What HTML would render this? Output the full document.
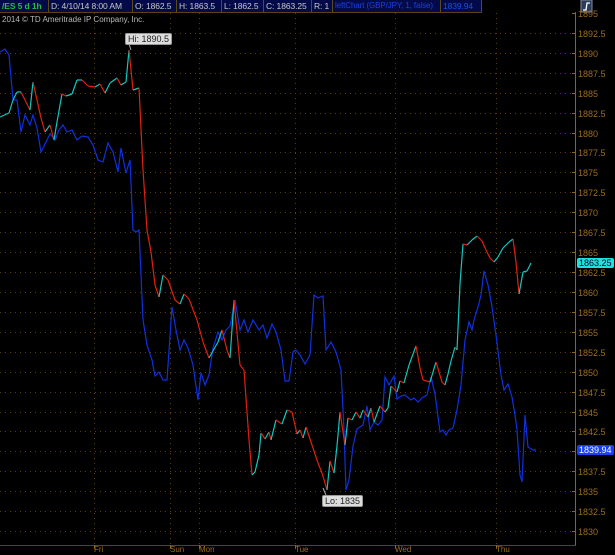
<!DOCTYPE html>
<html><head><meta charset="utf-8"><style>
*{margin:0;padding:0}
body{width:615px;height:555px;background:#000;overflow:hidden;position:relative;font-family:"Liberation Sans","DejaVu Sans",sans-serif}
.hdr{position:absolute;left:0;top:0;width:482px;height:12px;background:#020a4a;border-bottom:1px solid #5a4214}
.seg{position:absolute;top:0;height:12px;font-size:8.5px;line-height:12px;color:#c8c8c8;border-right:1px solid #5a4a20;white-space:nowrap;padding-left:2px;box-sizing:border-box;overflow:hidden;letter-spacing:-0.1px}
.cp{position:absolute;left:2px;top:15px;font-size:8px;color:#b8b8b8}
.yl{position:absolute;left:578px;font-size:9px;color:#9a6e20;line-height:10px}
.xl{position:absolute;top:545px;font-size:8px;color:#9a6e20}
.box{position:absolute;font-size:9px;line-height:10px;border-radius:2px;padding:0 2px}
</style></head><body>
<svg width="615" height="555" style="position:absolute;left:0;top:0">
<g id="grid" stroke="#5a3e10" stroke-width="1" stroke-dasharray="1,4"></g>
<line x1="575.5" y1="12" x2="575.5" y2="545" stroke="#8a6420"/>
<line x1="0" y1="545.5" x2="576" y2="545.5" stroke="#5a4214"/>
<g id="ticks" stroke="#8a6420"></g>
<polyline fill="none" stroke="#1030e0" stroke-width="1.2" points="0,52 5,49 9,55 13,100 17,100 21,132 25,115 30,125 33,115 37,128 41,152 45,144 50,134 55,140 59,130 63,125 67,132 72,130 77,140 82,136 88,137 93,145 98,160 103,162 108,143 113,152 118,172 121,148 126,173 130,160 133,230 136,232 139,230 143,320 147,345 152,360 155,376 159,372 163,380 167,380 172,307 176,330 180,350 184,340 188,348 193,365 198,400 201,373 205,385 209,375 213,348 218,332 222,340 226,330 230,326 235,300 240,330 244,320 248,332 253,320 259,330 263,325 267,338 272,324 276,332 281,350 285,381 289,381 293,352 296,350 300,355 305,364 310,355 314,295 318,298 323,296 326,350 331,342 336,352 341,370 344,430 346,490 349,480 353,446 357,429 363,425 367,406 370,430 374,422 378,425 382,420 385,377 389,385 394,376 397,399 401,396 405,395 411,400 414,398 418,402 422,398 427,395 431,377 435,394 440,432 443,430 446,435 449,430 453,428 457,410 461,385 465,340 469,322 472,330 474,320 478,307 481,295 484,271 488,285 492,307 496,335 501,375 504,390 508,384 512,397 515,415 517,430 520,475 522,482 525,415 528,447 533,450 536,450"/>
<g id="es" stroke-width="1.2"></g>
<path d="M129 44 L131 50" stroke="#aaa"/>
<path d="M323 488 L326 495" stroke="#aaa"/>
<rect x="581" y="0" width="11" height="12" fill="#2a3a5a" stroke="#889"/>
<path d="M583 10 L586 10 L587 3 L590 3" stroke="#fff" fill="none" stroke-width="1.3"/>
</svg>
<div class="hdr">
<div class="seg" style="left:0;width:49px;color:#20c040;font-weight:bold">/ES 5 d 1h</div>
<div class="seg" style="left:49px;width:84px">D: 4/10/14 8:00 AM</div>
<div class="seg" style="left:133px;width:44px">O: 1862.5</div>
<div class="seg" style="left:177px;width:45px">H: 1863.5</div>
<div class="seg" style="left:222px;width:42px">L: 1862.5</div>
<div class="seg" style="left:264px;width:48px">C: 1863.25</div>
<div class="seg" style="left:312px;width:21px">R: 1</div>
<div class="seg" style="left:333px;width:108px;color:#1a40e0;font-size:8px">leftChart (GBP/JPY, 1, false)</div>
<div class="seg" style="left:441px;width:41px;color:#1a50e0">1839.94</div>
</div>
<div class="cp">2014 © TD Ameritrade IP Company, Inc.</div>
<div id="yl"></div>
<div class="xl" style="left:94px">Fri</div>
<div class="xl" style="left:170px">Sun</div>
<div class="xl" style="left:199px">Mon</div>
<div class="xl" style="left:295px">Tue</div>
<div class="xl" style="left:395px">Wed</div>
<div class="xl" style="left:496px">Thu</div>
<div class="box" style="left:125px;top:33px;background:#ddd;color:#222;border:1px solid #999">Hi: 1890.5</div>
<div class="box" style="left:322px;top:495px;background:#ddd;color:#222;border:1px solid #999">Lo: 1835</div>
<div class="box" style="left:577px;top:258px;background:#20e0e0;color:#003;">1863.25</div>
<div class="box" style="left:577px;top:445px;background:#1a40f0;color:#fff;">1839.94</div>
<script>
var ns="http://www.w3.org/2000/svg";
var g=document.getElementById('grid'),t=document.getElementById('ticks'),yl=document.getElementById('yl');
function Y(v){return 13+(1895-v)*7.97;}
for(var v=1895;v>=1830;v-=2.5){var y=Math.round(Y(v))+0.5;
 if(v<1895){var l=document.createElementNS(ns,'line');l.setAttribute('x1',0);l.setAttribute('x2',572);l.setAttribute('y1',y);l.setAttribute('y2',y);g.appendChild(l);}
 var k=document.createElementNS(ns,'line');k.setAttribute('x1',572);k.setAttribute('x2',576);k.setAttribute('y1',y);k.setAttribute('y2',y);t.appendChild(k);
 var d=document.createElement('div');d.className='yl';d.style.top=(y-5)+'px';d.textContent=v;yl.appendChild(d);}
[94,170,199,295,395,496].forEach(function(x){var l=document.createElementNS(ns,'line');l.setAttribute('x1',x+.5);l.setAttribute('x2',x+.5);l.setAttribute('y1',13);l.setAttribute('y2',545);g.appendChild(l);
 var k=document.createElementNS(ns,'line');k.setAttribute('x1',x+.5);k.setAttribute('x2',x+.5);k.setAttribute('y1',545);k.setAttribute('y2',549);t.appendChild(k);});
var es=[[0,117],[9,113],[13,100],[17,92],[21,92],[25,100],[30,110],[33,82],[37,100],[41,118],[45,132],[50,125],[54,140],[57,122],[62,94],[66,96],[72,94],[77,80],[82,80],[88,86],[95,87],[100,84],[105,93],[110,83],[117,78],[121,85],[126,82],[129,50],[133,90],[139,88],[143,170],[147,230],[151,252],[155,285],[159,297],[163,275],[168,280],[175,300],[180,304],[184,294],[189,299],[197,320],[203,342],[209,358],[218,342],[222,330],[227,350],[230,358],[234,300],[240,365],[244,370],[249,440],[252,475],[255,472],[259,455],[261,433],[265,439],[269,432],[271,440],[276,420],[282,424],[287,410],[292,412],[297,434],[300,430],[303,438],[306,427],[313,448],[318,463],[322,473],[327,490],[330,461],[334,473],[337,446],[340,412],[345,445],[348,418],[352,420],[356,412],[360,418],[363,410],[368,417],[371,408],[374,422],[380,406],[385,412],[388,408],[391,386],[397,392],[400,381],[404,383],[409,365],[416,346],[420,368],[423,380],[430,382],[436,362],[442,382],[445,385],[448,374],[451,361],[455,347],[457,350],[460,284],[463,244],[467,245],[472,240],[477,236],[482,241],[486,250],[490,258],[494,262],[498,257],[503,248],[509,242],[513,239],[516,262],[519,294],[523,272],[527,271],[531,263]];
var eg=document.getElementById('es');
for(var i=1;i<es.length;i++){var l=document.createElementNS(ns,'line');l.setAttribute('x1',es[i-1][0]);l.setAttribute('y1',es[i-1][1]);l.setAttribute('x2',es[i][0]);l.setAttribute('y2',es[i][1]);l.setAttribute('stroke',es[i][1]>es[i-1][1]?'#e02010':'#10c8c0');eg.appendChild(l);}
</script>
</body></html>
